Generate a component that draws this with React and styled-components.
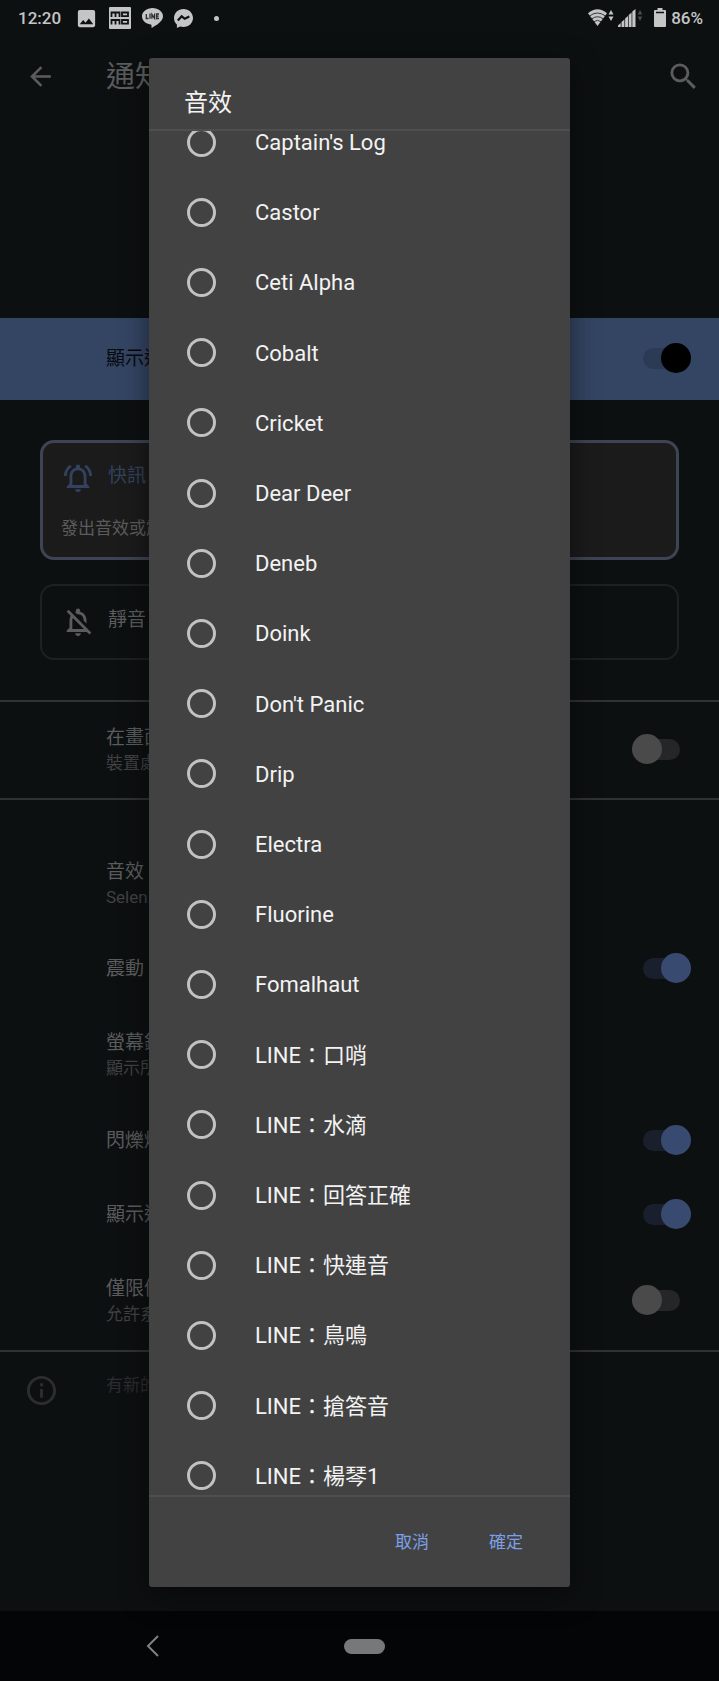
import styled, { createGlobalStyle } from 'styled-components';
import {
  MdArrowBack,
  MdSearch,
  MdImage,
  MdOutlineNotificationsActive,
  MdOutlineNotificationsOff,
  MdInfoOutline,
} from 'react-icons/md';

const GlobalStyle = createGlobalStyle`
  * {
    box-sizing: border-box;
  }
  body {
    margin: 0;
    background-color: #0d1011;
    font-family: Roboto, 'Noto Sans CJK TC', sans-serif;
    line-height: 1.2;
  }
  button {
    font: inherit;
    border: none;
    padding: 0;
    background: none;
    color: inherit;
  }
`;

const Screen = styled.div`
  position: relative;
  min-height: 100vh;
  display: flex;
  flex-direction: column;
  overflow: hidden;
  color: #5b5c5d;
`;

const StatusBar = styled.header`
  height: 36px;
  padding: 0 16px 0 18px;
  display: flex;
  align-items: center;
  justify-content: space-between;
  color: #c4c5c5;
  font-size: 17px;
  font-weight: 500;
`;
const StatusGroup = styled.div`
  display: flex;
  align-items: center;
  gap: ${(props) => props.$gap};

  svg {
    display: block;
  }
`;
const Dot = styled.span`
  width: 5px;
  height: 5px;
  margin-left: 10px;
  border-radius: 50%;
  background-color: currentColor;
`;

const AppBar = styled.div`
  height: 80px;
  padding: 0 18px 0 25px;
  display: flex;
  align-items: center;
`;
const IconButton = styled.button`
  display: flex;
`;
const Title = styled.h1`
  margin: 0 0 0 50px;
  padding-top: 2px;
  flex-grow: 1;
  font-size: 29px;
  line-height: 36px;
  font-weight: 400;
`;

const Banner = styled.label`
  height: 82px;
  margin-top: 202px;
  padding: 0 28px 0 106px;
  display: flex;
  align-items: center;
  justify-content: space-between;
  background-color: #344564;
  color: #07090d;
  font-size: 19px;
  line-height: 26px;
`;

const Switch = styled.input`
  appearance: none;
  flex-shrink: 0;
  width: 48px;
  height: 21px;
  margin: 0 ${(props) => (props.defaultChecked ? '0' : '11px')} 2px 0;
  display: flex;
  align-items: center;
  border-radius: 11px;
  background-color: ${(props) => props.$track || '#252628'};

  &::before {
    content: '';
    width: 30px;
    height: 30px;
    flex-shrink: 0;
    border-radius: 50%;
    background-color: ${(props) => props.$thumb || '#4a4a4a'};
  }
  &:checked {
    justify-content: flex-end;
  }
`;

const Importance = styled.section`
  margin: 40px;
  display: flex;
  flex-direction: column;
  gap: 24px;
`;
const Card = styled.button`
  height: ${(props) => (props.$selected ? '120px' : '76px')};
  padding: ${(props) => (props.$selected ? '18px' : '19px')};
  border: ${(props) =>
    props.$selected ? '3px solid #3f4454' : '2px solid #1d2122'};
  border-radius: 14px;
  background-color: ${(props) => (props.$selected ? '#1b1b1b' : 'transparent')};
  text-align: left;
  display: flex;
  flex-direction: column;
  gap: 20px;
`;
const CardHead = styled.div`
  height: 34px;
  display: flex;
  align-items: center;
  gap: 13px;
  color: ${(props) => props.$color};
  font-size: 19px;
`;
const CardLabel = styled.span`
  padding-bottom: 4px;
`;
const CardText = styled.div`
  font-size: 17px;
  line-height: 26px;
`;

const Rule = styled.hr`
  width: 100%;
  height: 2px;
  margin: 0;
  border: none;
  background-color: #303234;
`;
const Row = styled.label`
  height: ${(props) => props.$height};
  padding: 0 28px 0 106px;
  display: flex;
  align-items: center;
  justify-content: space-between;
`;
const RowTitle = styled.div`
  font-size: 19px;
  line-height: 26px;
`;
const RowNote = styled.div`
  font-size: 17px;
  line-height: 24px;
  color: #404243;
`;
const Group = styled.div`
  padding-top: 36px;
`;
const Footer = styled.div`
  padding: 21px 24px;
  display: flex;
  align-items: flex-start;
  gap: 47px;
  color: #2b2d2e;
  font-size: 17px;
  line-height: 24px;
`;

const Overlay = styled.div`
  position: absolute;
  inset: 58px 149px 94px;
  display: flex;
`;
const Dialog = styled.form`
  flex-grow: 1;
  min-width: 0;
  display: flex;
  flex-direction: column;
  background-color: #424242;
  border-radius: 3px;
  box-shadow: 0 8px 28px rgba(0, 0, 0, 0.5);
  color: #f3f3f3;
`;
const DialogTitle = styled.h2`
  height: 73px;
  margin: 0;
  padding: 27px 35px 0;
  border-bottom: 2px solid #4f4f4f;
  font-size: 24px;
  line-height: 36px;
  font-weight: 400;
`;
const Viewport = styled.div`
  flex: 1;
  min-height: 0;
  overflow: hidden;
`;
const SoundList = styled.div`
  height: 1404px;
  margin-top: -24px;
  display: grid;
  grid-auto-rows: 1fr;
`;
const Sound = styled.label`
  padding-left: 38px;
  display: flex;
  align-items: center;
  gap: 39px;
  font-size: 22px;
`;
const SoundName = styled.span`
  padding-top: 2px;
  line-height: 26px;
`;
const Radio = styled.input`
  appearance: none;
  width: 29px;
  height: 29px;
  margin: 0;
  border: 3px solid #c2c2c2;
  border-radius: 50%;
`;
const Actions = styled.div`
  height: 92px;
  padding: 0 47px;
  border-top: 2px solid #4f4f4f;
  display: flex;
  align-items: center;
  justify-content: flex-end;
  gap: 60px;
  color: #7ba0e6;
  font-size: 17px;
`;

const NavBar = styled.nav`
  height: 70px;
  margin-top: auto;
  padding: 0 136px 0 146px;
  display: grid;
  grid-template-columns: 1fr auto 1fr;
  align-items: center;
  background-color: #040506;
  color: #7f8182;
`;
const HomePill = styled.button`
  width: 41px;
  height: 15px;
  border-radius: 8px;
  background-color: #777879;
`;

const sounds = [
  "Captain's Log",
  'Castor',
  'Ceti Alpha',
  'Cobalt',
  'Cricket',
  'Dear Deer',
  'Deneb',
  'Doink',
  "Don't Panic",
  'Drip',
  'Electra',
  'Fluorine',
  'Fomalhaut',
  'LINE：口哨',
  'LINE：水滴',
  'LINE：回答正確',
  'LINE：快連音',
  'LINE：鳥鳴',
  'LINE：搶答音',
  'LINE：楊琴1',
];

function SettingRow({ title, note, height, toggle }) {
  return (
    <Row as={toggle ? 'label' : 'div'} $height={height}>
      <div>
        <RowTitle>{title}</RowTitle>
        {note && <RowNote>{note}</RowNote>}
      </div>
      {toggle === 'on' && (
        <Switch type="checkbox" defaultChecked $track="#1a1f2d" $thumb="#384a70" />
      )}
      {toggle === 'off' && <Switch type="checkbox" />}
    </Row>
  );
}

function MomoIcon() {
  return (
    <svg width="22" height="22" viewBox="0 0 22 22">
      <rect width="22" height="22" rx="1" fill="currentColor" />
      <g fill="none" stroke="#101314" strokeWidth="1.8">
        <path d="M2.5 10V5.5h8V10M6.5 5.5V10M13 5.5h6v3.6h-6z" />
        <path d="M2.5 17.5V13h8v4.5M6.5 13v4.5M13 13h6v3.6h-6z" />
      </g>
    </svg>
  );
}

function LineIcon() {
  return (
    <svg width="21" height="20" viewBox="0 0 21 20">
      <path
        d="M10.5 0C4.7 0 0 3.7 0 8.3c0 4.1 3.7 7.5 8.6 8.2 1.2.3.9 1 .8 2.6 0 .6.4.8 1.1.4C14 17.5 21 13.5 21 8.3 21 3.7 16.3 0 10.5 0z"
        fill="currentColor"
      />
      <path
        d="M4.3 6v4.5h2.2M8 5.6v5.2M9.9 10.8V6.3l2.7 4V5.6M17 6h-2.3v4.5H17M14.7 8.2h2"
        fill="none"
        stroke="#2a2d2e"
        strokeWidth="1.3"
      />
    </svg>
  );
}

function MessengerIcon() {
  return (
    <svg width="19" height="19" viewBox="0 0 19 19">
      <path
        d="M9.5 0C4.2 0 0 3.9 0 9c0 2.7 1.1 5 2.9 6.6V19l3.2-1.5c1 .3 2.2.5 3.4.5 5.3 0 9.5-3.9 9.5-9S14.8 0 9.5 0z"
        fill="currentColor"
      />
      <path
        d="M3.8 11.6l3.9-4.3 3 2.5 4.6-2.4"
        fill="none"
        stroke="#101314"
        strokeWidth="2.2"
      />
    </svg>
  );
}

function WifiIcon() {
  return (
    <svg width="26" height="18" viewBox="0 0 26 18">
      <path d="M0 4.2Q9.5-3.6 19 4.2L9.5 17z" fill="currentColor" />
      <g fill="none" stroke="#101314" strokeWidth="0.8">
        <path d="M1.5 7q8-6 16 0M3.5 10q6-4.5 12 0M5.8 12.8q3.7-3 7.4 0" />
      </g>
      <path d="M23 1l2.5 4.5h-5zM23 12l2.5-4.5h-5z" fill="currentColor" />
    </svg>
  );
}

function SignalIcon() {
  return (
    <svg width="25" height="18" viewBox="0 0 25 18">
      <path
        d="M0 18v-1.5L2.7 14v4zM3.5 18v-5l2.9-2.5V18zM7.1 18V9.6L10 7v11zM10.7 18V6l2.9-2.5V18zM14.3 18V2.5L17.5 0v18z"
        fill="currentColor"
      />
      <path d="M22 1l2.3 4.5h-4.6zM22 12l2.3-4.5h-4.6z" fill="#4a4c4d" />
    </svg>
  );
}

function BatteryIcon() {
  return (
    <svg width="12" height="19" viewBox="0 0 12 19">
      <path
        d="M3.5 0h5v2H11q1 0 1 1v15q0 1-1 1H1q-1 0-1-1V3q0-1 1-1h2.5z"
        fill="currentColor"
      />
      <path d="M2 4.5h8" stroke="#101314" strokeWidth="1.5" />
    </svg>
  );
}

function App() {
  return (
    <>
      <GlobalStyle />
      <Screen>
        <StatusBar>
          <StatusGroup $gap="14px">
            <span>12:20</span>
            <StatusGroup $gap="11px">
              <MdImage size={23} />
              <MomoIcon />
              <LineIcon />
              <MessengerIcon />
              <Dot />
            </StatusGroup>
          </StatusGroup>
          <StatusGroup $gap="11px">
            <StatusGroup $gap="4px">
              <WifiIcon />
              <SignalIcon />
            </StatusGroup>
            <StatusGroup $gap="5px">
              <BatteryIcon />
              <span>86%</span>
            </StatusGroup>
          </StatusGroup>
        </StatusBar>

        <AppBar>
          <IconButton type="button" aria-label="返回">
            <MdArrowBack size={31} />
          </IconButton>
          <Title>通知</Title>
          <IconButton type="button" aria-label="搜尋">
            <MdSearch size={35} />
          </IconButton>
        </AppBar>

        <Banner>
          顯示通
          <Switch type="checkbox" defaultChecked $track="#2b3a55" $thumb="#000" />
        </Banner>

        <Importance>
          <Card type="button" $selected>
            <CardHead $color="#33435f">
              <MdOutlineNotificationsActive size={34} />
              <CardLabel>快訊</CardLabel>
            </CardHead>
            <CardText>發出音效或震</CardText>
          </Card>
          <Card type="button">
            <CardHead $color="#5b5c5d">
              <MdOutlineNotificationsOff size={34} />
              <CardLabel>靜音</CardLabel>
            </CardHead>
          </Card>
        </Importance>

        <Rule />
        <SettingRow title="在畫面" note="裝置處" height="96px" toggle="off" />
        <Rule />
        <Group>
          <SettingRow title="音效" note="Seleni" height="96px" />
          <SettingRow title="震動" height="74px" toggle="on" />
          <SettingRow title="螢幕鎖" note="顯示所" height="98px" />
          <SettingRow title="閃爍燈" height="74px" toggle="on" />
          <SettingRow title="顯示通" height="74px" toggle="on" />
          <SettingRow title="僅限優" note="允許系" height="98px" toggle="off" />
        </Group>
        <Rule />
        <Footer>
          <MdInfoOutline size={35} />
          有新的
        </Footer>

        <NavBar>
          <IconButton type="button" aria-label="上一頁">
            <svg width="14" height="22" viewBox="0 0 14 22">
              <path
                d="M12 1L2 11l10 10"
                fill="none"
                stroke="currentColor"
                strokeWidth="2"
              />
            </svg>
          </IconButton>
          <HomePill type="button" aria-label="主畫面" />
        </NavBar>

        <Overlay>
          <Dialog role="dialog" aria-label="音效">
            <DialogTitle>音效</DialogTitle>
            <Viewport>
              <SoundList>
                {sounds.map((sound) => (
                  <Sound key={sound}>
                    <Radio type="radio" name="sound" />
                    <SoundName>{sound}</SoundName>
                  </Sound>
                ))}
              </SoundList>
            </Viewport>
            <Actions>
              <button type="button">取消</button>
              <button type="button">確定</button>
            </Actions>
          </Dialog>
        </Overlay>
      </Screen>
    </>
  );
}

export default App;
